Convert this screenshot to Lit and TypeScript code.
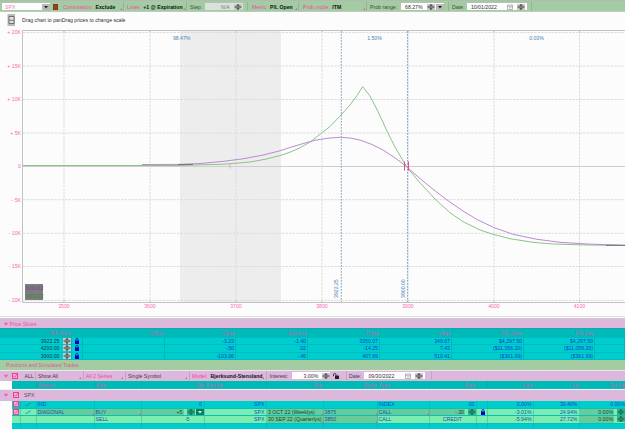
import { LitElement, html, svg, css } from 'lit'
import { customElement } from 'lit/decorators.js'
import { classMap } from 'lit/directives/class-map.js'

const spinner = html`
  <svg class="spin" viewBox="0 0 8 6" width="8" height="6">
    <rect class="spin-bk" width="8" height="6" />
    <path class="spin-fg" d="M4 0L5.8 1.8H2.2ZM4 6L5.8 4.2H2.2ZM0.6 2.5H7.4V3.5H0.6Z" />
  </svg>`

const dropdown = html`
  <svg class="drop" viewBox="0 0 8 6" width="8" height="6">
    <rect class="drop-bk" width="8" height="6" />
    <path class="drop-fg" d="M2 2H6L4 4.5Z" />
  </svg>`

const calendar = html`
  <svg class="cal" viewBox="0 0 6 6" width="6" height="6">
    <path d="M0.5 5.5V1H5.5V5.5ZM0.5 2.3H5.5M2 3.8H4.5" fill="none" stroke="#999" stroke-width="0.7" />
  </svg>`

const lock = html`
  <svg class="lock" viewBox="0 0 4 6" width="4" height="6">
    <path d="M0 2.5H4V6H0Z" fill="#0000c8" />
    <path d="M0.9 3V1.6Q0.9 0.5 2 0.5T3.1 1.6V3" fill="none" stroke="#0000c8" stroke-width="0.8" />
  </svg>`

const openLock = html`
  <svg viewBox="0 0 6 6" width="6" height="6">
    <path d="M2 2.6H6V6H2Z" fill="#222" />
    <path d="M0.5 3.2V1.6Q0.5 0.5 1.7 0.5T3 1.6V3" fill="none" stroke="#222" stroke-width="0.9" />
  </svg>`

const arrow = html`
  <svg viewBox="0 0 4 4" width="4" height="4">
    <path d="M0.3 0.8L2 3.2L3.7 0.8" fill="#f6a" stroke="#f04c9c" stroke-width="0.7" />
  </svg>`

const check = html`
  <svg viewBox="0 0 6 6" width="6" height="6">
    <rect x="0.5" y="0.5" width="5" height="5" fill="#f8b4d8" stroke="#f23c92" />
    <path d="M1.4 2.8L2.7 4.2L5.4 0.8" fill="none" stroke="#f23c92" stroke-width="0.9" />
  </svg>`

const curve = html`
  <svg viewBox="0 0 6 4" width="6" height="4">
    <path d="M0.3 3.2H2.8L3.6 1.7H5L5.7 0.4" fill="none" stroke="#16777f" stroke-width="0.6" />
  </svg>`

const shared = css`
  * {
    box-sizing: border-box;
  }
  svg {
    display: block;
    flex: none;
  }
  .spin-bk { fill: #c9c9c9; }
  .spin-fg { fill: #333; }
  .drop-bk { fill: #b9b9b9; }
  .drop-fg { fill: #222; }
  .bar {
    display: grid;
    align-items: center;
    white-space: nowrap;
  }
  .pink { color: #f5479f; }
  .b { font-weight: bold; color: #111; }
  .item {
    display: flex;
    align-items: center;
    height: 100%;
    position: relative;
    border-right: 1px solid rgba(90, 90, 90, 0.2);
  }
  .tick::after {
    content: '';
    position: absolute;
    right: 1px;
    bottom: 1px;
    border-left: 2px solid transparent;
    border-bottom: 2px solid #f0509c;
  }
  .input {
    display: flex;
    align-items: center;
    height: 7px;
    background: #fdfdfd;
    color: #333;
  }
`

@customElement('tool-bar')
class ToolBar extends LitElement {
  static styles = [shared, css`
    :host {
      display: block;
      height: 12px;
      padding-top: 1px;
      background: #a3cca3;
      border-top: 1px solid #b6b8b5;
      border-bottom: 1px solid #bccdbb;
      color: #3c4c3c;
    }
    .bar {
      height: 9px;
      padding-left: 2px;
      grid-template-columns: 49px 9px 64px 63px 61px 51px 68px 82px 83px;
    }
    .symbol {
      color: #f77cbb;
      padding-left: 3px;
      width: 48px;
      justify-content: space-between;
    }
    .badge {
      width: 5px;
      height: 6px;
      margin-left: 2px;
      background: #b03324;
      border: 1px solid #7c3a22;
    }
    .item { padding-left: 3px; gap: 2.5px; }
    .step { width: 38px; background: #dbe2db; color: #777; justify-content: flex-end; gap: 4px; padding-right: 1px; }
    .range { width: 43px; justify-content: flex-end; gap: 1px; margin-left: 1px; }
    .range span { margin-right: 3px; }
    .date { width: 60px; padding-left: 4px; }
    .cal { margin: 0 4px 0 10px; }
    .last { padding-left: 4px; }
  `]

  render () {
    return html`
    <div class="bar">
      <div class="input symbol">SPX ${dropdown}</div>
      <div class="badge"></div>
      <div class="item tick"><span class="pink">Commission:</span><span class="b">Exclude</span></div>
      <div class="item tick"><span class="pink">Lines:</span><span class="b">+1 @ Expiration</span></div>
      <div class="item"><span>Step:</span><div class="input step">N/A ${spinner}</div></div>
      <div class="item tick last"><span class="pink">Metric:</span><span class="b">P/L Open</span></div>
      <div class="item tick last"><span class="pink">Prob mode:</span><span class="b">ITM</span></div>
      <div class="item"><span>Prob range:</span>
        <div class="input range"><span>68.27%</span>${spinner}${dropdown}</div></div>
      <div class="item"><span>Date:</span><div class="input date">10/01/2022 ${calendar}${spinner}</div></div>
    </div>
    `
  }
}

const GREEN = '23,165.5 178,165.5 200,164.8 222,164.3 233,163.5 250,162 265,159.3 280,155.6 290,152.2 300,147.8 310,142 320,134.3 330,126.5 341,115 350,105 357,95.5 362.7,86.7 370,96 378,111.5 387,131 395,147 402,159 408,168.5 419,181.7 435,199 450,212.7 463,221.7 480,230 493,234.3 510,238.7 533,242.3 553,244 587,245 625,245.4'
const PURPLE = '142,164.5 178,164.4 200,163.5 222,161.5 243,158.8 262,155.3 280,150.8 290,147.5 305,143 315,140.3 327,138.3 340,137.3 350,138 360,140 372,144.5 383,150 393,156.5 403,163.8 408,168 421.7,180 433,189.2 447,200 463,211 476.7,219.3 493.3,227.3 513,234.3 537,239.3 560,242.3 587,244 617,245 625,245.3'

@customElement('risk-chart')
class RiskChart extends LitElement {
  static styles = [shared, css`
    :host {
      display: block;
      height: 306px;
    }
    .grid { stroke: #dcdcdc; stroke-dasharray: 2.5 1; }
    .axis { stroke: #c2c2c2; }
    .zero { stroke: #d0cccf; }
    .slice { stroke: #7fa3c0; stroke-dasharray: 1.7 1.3; }
    .line { fill: none; stroke-width: 1; }
    .expiry { stroke: #8cc488; }
    .today { stroke: #b98dd0; }
    .both { stroke: #777; }
    .label { fill: #f96bb5; }
    .prob { fill: #4a82b4; }
    .note { fill: #333; }
    .mark { stroke: #e84a92; }
  `]

  render () {
    const xs = [64, 150, 236, 322, 408, 494, 579.5]
    const ys = [32.5, 66, 99.5, 133, 166.5, 199.7, 233.3, 266.5, 300.4]
    const names = ['+ 20K', '+ 15K', '+ 10K', '+ 5K', '0', '- 5K', '- 10K', '- 15K', '- 20K']
    return html`
    <svg viewBox="0 12 625 306" width="625" height="306">
      <rect y="12" width="625" height="306" fill="#fcfcfc" />
      <rect x="180" y="31" width="101" height="271" fill="#ededed" />
      <rect x="7.5" y="14" width="7.5" height="12" fill="#b9b9b9" />
      <path d="M9 16.5H14V23.5H9ZM9.5 20.3H13.5" fill="#e2e2e2" stroke="#555" stroke-width="0.8" />
      <text class="note" x="22" y="22.2" textLength="103.5">Drag chart to panDrag prices to change scale</text>
      ${xs.map((x, i) => svg`
        <line class="grid" x1=${x} x2=${x} y1="31" y2="302" />
        <path class="axis" d="M${x} 30V33M${x} 300V303" />
        <text class="label" x=${x} y="308.2" text-anchor="middle">${3500 + i * 100}</text>`)}
      ${ys.map((y, i) => svg`
        <line class=${i === 4 ? 'zero' : 'grid'} x1="23" x2="625" y1=${y} y2=${y} />
        <text class="label" x="21" y=${y + 1.9} text-anchor="end">${names[i]}</text>`)}
      <path class="axis" d="M625 30.5H22.5V302.5H625" fill="none" />
      <line class="slice" x1="341.3" x2="341.3" y1="31" y2="302" />
      <line class="slice" x1="407.6" x2="407.6" y1="31" y2="302" />
      <polyline class="line expiry" points=${GREEN} />
      <polyline class="line today" points=${PURPLE} />
      <path class="both" d="M178 164.5H193M606 245.4H625" />
      <path class="mark" d="M404.5 161.5V170.5M408.5 161.5V170.5" />
      <path d="M230 163.5V168.5" stroke="#c9b4b9" />
      <text class="prob" x="181.7" y="40.3" text-anchor="middle">98.47%</text>
      <text class="prob" x="374.5" y="40.3" text-anchor="middle">1.50%</text>
      <text class="prob" x="536.5" y="40.3" text-anchor="middle">0.03%</text>
      <text class="prob" transform="translate(338 298) rotate(-90)">3922.25</text>
      <text class="prob" transform="translate(404.7 298) rotate(-90)">3900.00</text>
      <rect x="25" y="284" width="18" height="16" fill="#7d7d7d" />
      <text x="26" y="290" fill="#7a3f9c">9/30/22</text>
      <text x="26" y="297.8" fill="#43803e">10/1/22</text>
      <path d="M0 316.5H625" stroke="#dedede" />
    </svg>
    `
  }
}

const SLICES = [
  ['3922.25', '-3.23', '-1.40', '3350.07', '349.67', '$4,297.50', '$4,297.50'],
  ['4200.00', '-.50', '.02', '-14.25', '7.43', '($11,056.20)', '($11,056.20)'],
  ['3900.00', '-103.06', '-.46', '407.69', '510.41', '($361.99)', '($361.99)']
]

@customElement('price-slices')
class PriceSlices extends LitElement {
  static styles = [shared, css`
    :host {
      display: block;
      height: 42px;
    }
    .title {
      display: flex;
      align-items: center;
      gap: 2px;
      height: 10px;
      padding-left: 3.5px;
      background: #dcb9dc;
      border-top: 1px solid #d3c6d3;
      color: #f04a9e;
    }
    .row {
      display: grid;
      grid-template-columns: 72px 10.5px 82px 71px 72px 72px 72px 72px 71px 1fr;
      height: 7.5px;
      background: #00cece;
      border-bottom: 0.5px solid #00bcbc;
      color: #073fd0;
    }
    .head {
      height: 9.5px;
      background: #00b9b9;
      color: #c162ab;
      border-top: 1px solid #12a9ab;
    }
    .row > div {
      display: flex;
      align-items: center;
      justify-content: flex-end;
      padding-right: 0.5px;
      border-right: 1px solid #02b5b8;
    }
    .head > div { padding-right: 0; }
    .row .price { color: #083c50; gap: 3.5px; padding-right: 0; }
    .lock { margin-right: 2.5px; }
  `]

  render () {
    const heads = ['Stk Price', '', 'Offset', 'Delta', 'Gamma', 'Theta', 'Vega', 'P/L Open', 'P/L Day', '']
    return html`
    <div class="title">${arrow}<span>Price Slices</span></div>
    <div class="row head">${heads.map(h => html`<div>${h}</div>`)}</div>
    ${SLICES.map(([price, ...rest]) => html`
      <div class="row">
        <div class="price">${price}${spinner}</div>
        <div>${lock}</div>
        <div></div>
        ${rest.map(v => html`<div>${v}</div>`)}
        <div></div>
      </div>`)}
    `
  }
}

@customElement('trade-positions')
class TradePositions extends LitElement {
  static styles = [shared, css`
    :host {
      display: block;
      background: #fcfcfc;
    }
    .title {
      display: flex;
      align-items: center;
      height: 10px;
      padding-left: 6px;
      background: #a3cca3;
      color: #df5a93;
    }
    .bar {
      height: 11px;
      grid-template-columns: 12px 10px 13.5px 48px 42px 64px 77.5px 79.5px 85px;
      background: #dcb9dc;
      border-top: 1px solid #efe6ef;
      border-bottom: 1px solid #cfc2cf;
      color: #443a44;
    }
    .bar > :first-child, .group > :first-child { margin-left: 3.5px; }
    .item { padding-left: 2.5px; gap: 3px; }
    .tick::after { right: 2px; }
    .rate { width: 37.5px; justify-content: flex-end; gap: 3.5px; margin-left: 1px; }
    .date { width: 61px; padding-left: 4px; }
    .cal { margin: 0 4px 0 11px; }
    .group {
      display: grid;
      grid-template-columns: 13px 11px 1fr;
      align-items: center;
      height: 12px;
      background: #dcb9dc;
      border-top: 1px solid #f4f0f4;
      border-bottom: 1px solid #cdc3cd;
      color: #5b5060;
    }
    .row {
      display: grid;
      grid-template-columns: 8.5px 16px 58px 47px 63px 62.5px 56.5px 54px 52.5px 47px 10.5px 46.5px 46px 1fr;
      height: 7.5px;
      margin-left: 12px;
      background: #00cece;
      border-bottom: 0.5px solid #08c0ba;
      color: #0b49cc;
    }
    .row > div {
      display: flex;
      align-items: center;
      justify-content: flex-end;
      padding: 0 1.5px 0 1px;
      border-right: 1px solid rgba(0, 160, 160, 0.35);
      position: relative;
      white-space: nowrap;
    }
    .row > .l { justify-content: flex-start; }
    .row > :first-child { justify-content: flex-start; }
    .row > :nth-child(2) { justify-content: center; }
    .row > :last-child { border-right: none; padding-right: 0; }
    .head {
      height: 8px;
      background: #00b9b9;
      color: #c162ab;
    }
    .head > div { padding-right: 0; }
    .leg {
      background: #7bedb1;
      color: #1c4fb4;
    }
    .row > .edit { background: #67cc99; }
    .row > .ctl { padding: 0; gap: 1px; }
    .ctl > span {
      flex: 1;
      align-self: stretch;
      display: flex;
      align-items: center;
      justify-content: flex-end;
      background: #67cc99;
      color: #14463a;
      margin-right: 2px;
      padding-right: 1px;
    }
    .row .tick::after { right: 0; bottom: 0; }
    .spin-bk { fill: #3fae85; }
    .ctl .spin-fg { fill: #075e42; }
    .ctl .drop-bk { fill: #087f5d; }
    .ctl .drop-fg { fill: #d4fae8; }
    .bar .spin-bk { fill: #c9c9c9; }
    .dark { color: #17442f; }
    .row .far { padding-right: 14px; }
    .fill {
      height: 6px;
      border-bottom: none;
    }
  `]

  leg (first: boolean, exp: string, strike: string, yld: string, vol: string) {
    return html`
    <div class="row leg">
      <div>${first ? check : ''}</div>
      <div>${first ? curve : ''}</div>
      <div class=${classMap({ l: true, edit: first, tick: first })}>${first ? 'DIAGONAL' : ''}</div>
      <div class=${classMap({ l: true, edit: first, tick: first })}>${first ? 'BUY' : 'SELL'}</div>
      ${first
        ? html`<div class="ctl"><span>+5</span>${spinner}${dropdown}</div>`
        : html`<div class="far">-5</div>`}
      <div>SPX</div>
      <div class="l edit tick dark">${exp}</div>
      <div class="l edit tick">${strike}</div>
      <div class=${classMap({ l: true, edit: first, tick: first })}>CALL</div>
      ${first
        ? html`<div class="ctl"><span>-.30</span>${spinner}</div>`
        : html`<div class="far">CREDIT</div>`}
      <div>${first ? lock : ''}</div>
      <div>${yld}</div>
      <div>${vol}</div>
      <div class="ctl"><span>0.00%</span>${spinner}</div>
    </div>`
  }

  render () {
    return html`
    <div class="title">Positions and Simulated Trades</div>
    <div class="bar">
      ${arrow}
      <div>${check}</div>
      <div class="item">ALL</div>
      <div class="item tick">Show All</div>
      <div class="item tick pink">All 2 Series</div>
      <div class="item tick">Single Symbol</div>
      <div class="item tick"><span class="pink">Model:</span><span class="b">Bjerksund-Stensland</span></div>
      <div class="item"><span>Interest:</span>
        <div class="input rate">3.00% ${spinner}</div>${openLock}</div>
      <div class="item"><span>Date:</span><div class="input date">09/30/2022 ${calendar}${spinner}</div></div>
    </div>
    <div class="row head">
      <div></div><div></div>
      <div class="l">Spread</div>
      <div class="l">Side</div>
      <div>Qty</div>
      <div class="l">Symbol</div>
      <div>Exp</div>
      <div>Strike</div>
      <div class="l">Type</div>
      <div>Price</div>
      <div></div>
      <div>Yield</div>
      <div>Vol</div>
      <div>Vol Adj</div>
    </div>
    <div class="group">${arrow}${check}<span>SPX</span></div>
    <div class="row">
      <div>${check}</div>
      <div>${curve}</div>
      <div class="l">IND</div>
      <div></div>
      <div>0</div>
      <div>SPX</div>
      <div></div>
      <div></div>
      <div class="l">INDEX</div>
      <div>.00</div>
      <div></div>
      <div>0.00%</div>
      <div>30.40%</div>
      <div>0.00%</div>
    </div>
    ${this.leg(true, '3 OCT 22 (Weeklys)', '3875', '-3.01%', '24.94%')}
    ${this.leg(false, '30 SEP 22 (Quarterlys)', '3850', '-5.94%', '27.72%')}
    <div class="row fill">${Array.from({ length: 14 }, () => html`<div></div>`)}</div>
    `
  }
}

@customElement('app-root')
class AppRoot extends LitElement {
  static styles = css`
    :host {
      display: flex;
      flex-direction: column;
      width: 625px;
      height: 429px;
      overflow: hidden;
      background: #fcfcfc;
      font-family: 'Liberation Sans', Arial, sans-serif;
      font-size: 5.2px;
      line-height: 6px;
    }
  `

  render () {
    return html`
      <tool-bar></tool-bar>
      <risk-chart></risk-chart>
      <price-slices></price-slices>
      <trade-positions></trade-positions>
    `
  }
}
